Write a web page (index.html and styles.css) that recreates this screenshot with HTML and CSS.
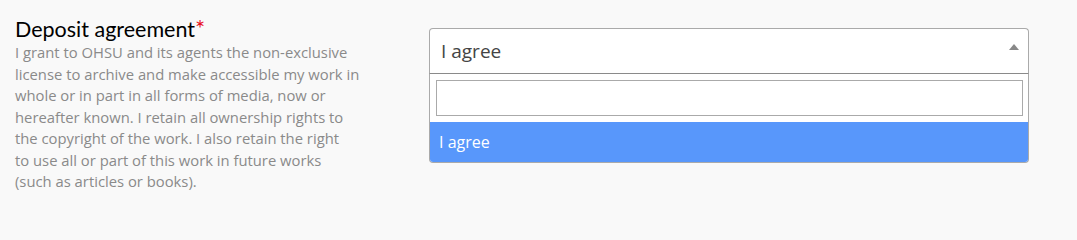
FILE: index.html
```html
<!DOCTYPE html>
<html>
<head>
<meta charset="utf-8">
<link rel="stylesheet" href="styles.css">
</head>
<body>
<div class="row">
  <div class="label-col">
    <h2 class="title">Deposit agreement<span class="req">*</span></h2>
    <p class="desc">I grant to OHSU and its agents the non-exclusive license to archive and make accessible my work in whole or in part in all forms of media, now or hereafter known. I retain all ownership rights to the copyright of the work. I also retain the right<br>to use all or part of this work in future works<br>(such as articles or books).</p>
  </div>
  <div class="field-col">
    <div class="selection">
      <span class="sel-text">I agree</span>
      <span class="arrow"></span>
    </div>
    <div class="dropdown">
      <div class="search-wrap"><input class="search" type="text"></div>
      <ul class="options">
        <li class="option active">I agree</li>
      </ul>
    </div>
  </div>
</div>
</body>
</html>
```

FILE: styles.css
```css
html, body {
  margin: 0;
  padding: 0;
  background: #f9f9f9;
}
.row {
  display: flex;
  padding: 16px 0 0 15px;
}
.label-col {
  width: 350px;
  flex: none;
}
.title {
  margin: 0;
  font-family: Lato, "Open Sans", sans-serif;
  font-weight: 400;
  font-size: 21.5px;
  line-height: 26px;
  color: #000;
}
.req {
  color: #e8131f;
  font-size: 24px;
  line-height: 0;
}
.desc {
  margin: 0;
  font-family: "Open Sans", sans-serif;
  font-size: 14.8px;
  line-height: 21.5px;
  color: #8a8a8a;
}
.field-col {
  margin-left: 64px;
  margin-top: 12px;
  width: 600px;
  flex: none;
}
.selection {
  box-sizing: border-box;
  height: 46px;
  border: 1px solid #aaa;
  border-bottom-color: #8a8a8a;
  border-radius: 4px 4px 0 0;
  background: #fff;
  display: flex;
  align-items: center;
  padding: 0 11px;
  position: relative;
}
.sel-text {
  font-family: "Open Sans", sans-serif;
  font-size: 19px;
  color: #444;
}
.arrow {
  position: absolute;
  right: 9px;
  top: 15px;
  width: 0;
  height: 0;
  border-left: 5px solid transparent;
  border-right: 5px solid transparent;
  border-bottom: 6px solid #888;
}
.dropdown {
  box-sizing: border-box;
  border: 1px solid #aaa;
  border-top: none;
  border-radius: 0 0 4px 4px;
  background: #fff;
  overflow: hidden;
}
.search-wrap {
  padding: 6px 5px 6px 6px;
}
.search {
  display: block;
  box-sizing: border-box;
  width: 100%;
  height: 36px;
  margin: 0;
  border: 1px solid #aaa;
  font-family: "Open Sans", sans-serif;
  font-size: 16px;
  outline: none;
}
.options {
  list-style: none;
  margin: 0;
  padding: 0;
}
.option {
  font-family: "Open Sans", sans-serif;
  font-size: 16px;
  line-height: 22px;
  padding: 9px 9px;
}
.option.active {
  background: #5897fb;
  color: #fff;
}
```
